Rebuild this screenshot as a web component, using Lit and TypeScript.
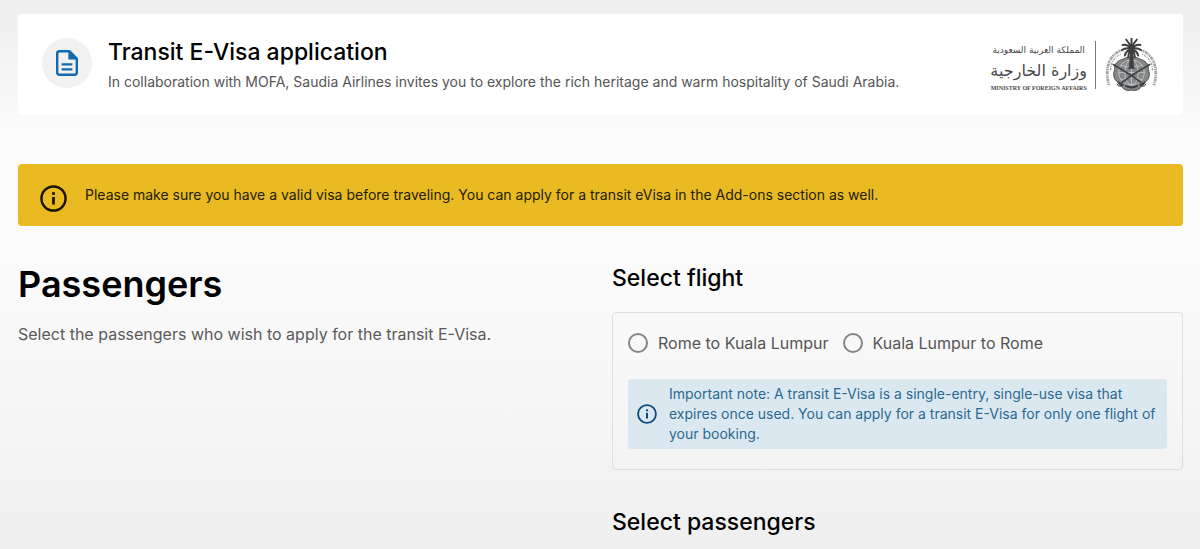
import { LitElement, html, css, svg } from "lit";
import { customElement, state } from "lit/decorators.js";

const infoIcon = svg`
  <circle cx="12" cy="12" r="10.7" fill="none" stroke="currentColor" stroke-width="2.2"></circle>
  <rect x="10.8" y="6.4" width="2.4" height="2.4" fill="currentColor"></rect>
  <rect x="10.8" y="10.6" width="2.4" height="6.8" fill="currentColor"></rect>`;

@customElement("mofa-logo")
class MofaLogo extends LitElement {
  static styles = css`
    :host {
      display: flex;
      align-items: center;
      gap: 8px;
      color: #48494b;
    }
    .words {
      display: flex;
      flex-direction: column;
      align-items: center;
      padding-top: 5px;
      white-space: nowrap;
    }
    .kingdom {
      font: 9px/16px "DejaVu Sans", sans-serif;
    }
    .ministry {
      font: 16px/26px "DejaVu Sans", sans-serif;
    }
    .english {
      font: bold 6px/8px "Liberation Serif", serif;
    }
    .rule {
      width: 1px;
      height: 48px;
      background: #77787a;
    }
    svg {
      width: 55px;
      height: 55px;
      display: block;
    }
  `;
  render() {
    return html`
      <div class="words">
        <span class="kingdom" lang="ar" dir="rtl">المملكة العربية السعودية</span>
        <span class="ministry" lang="ar" dir="rtl">وزارة الخارجية</span>
        <span class="english">MINISTRY OF FOREIGN AFFAIRS</span>
      </div>
      <span class="rule"></span>
      <svg viewBox="370 36 164 166" aria-hidden="true" fill="none" stroke="#4b4c4e">
        <g stroke="#a2a3a5" stroke-width="8">
          <path stroke-dasharray="5 2 9 2 3 2" d="M418 78C385 92 370 130 384 181"></path>
          <path stroke-dasharray="5 2 9 2 3 2" d="M486 78C519 92 534 130 520 181"></path>
        </g>
        <g stroke="#a2a3a5" stroke-width="4">
          <path stroke-dasharray="3 3 7 3" d="M420 88C397 99 388 118 389 138"></path>
          <path stroke-dasharray="3 3 7 3" d="M484 88C507 99 516 118 515 138"></path>
        </g>
        <path fill="#858789" stroke="#4b4c4e" stroke-width="3" d="M427 103C438 94 466 94 477 103C492 105 507 119 502 134C511 149 504 170 487 175C478 199 462 199 452 196C442 199 426 199 417 175C400 170 393 149 402 134C397 119 412 105 427 103Z"></path>
        <g stroke="#d6d7d8" stroke-width="2">
          <ellipse cx="452" cy="143" rx="39" ry="38"></ellipse>
          <ellipse cx="452" cy="143" rx="20" ry="38"></ellipse>
          <path d="M413 143H491M419 121Q452 133 485 121M419 165Q452 154 485 165M452 105V181"></path>
        </g>
        <g stroke="#414244" stroke-linecap="round">
          <path stroke-width="5" d="M397 119C422 133 449 148 487 178M507 119C482 133 455 148 417 178"></path>
          <path stroke-width="6" d="M478 180Q486 184 491 173M426 180Q418 184 413 173"></path>
          <path stroke-width="3" d="M480 184Q493 188 495 178M424 184Q411 188 409 178"></path>
          <path stroke-width="7" d="M436 184Q452 192 468 184"></path>
        </g>
        <path fill="#3e3f41" stroke="none" d="M447 74H457L459 126L464 132H440L445 126Z"></path>
        <g stroke="#3e3f41" stroke-width="6" stroke-linecap="round" stroke-linejoin="round">
          <path d="M452 72V41M452 72Q446 54 436 44M452 72Q458 54 468 44M452 72Q440 57 425 60M452 72Q464 57 479 60M452 72Q436 66 422 76M452 72Q468 66 482 76M452 72Q436 75 432 92M452 72Q468 75 472 92M452 72Q443 80 442 97M452 72Q461 80 462 97"></path>
        </g>
      </svg>
    `;
  }
}

@customElement("app-root")
class AppRoot extends LitElement {
  @state() private flight = "";

  static styles = css`
    :host {
      display: block;
      font-family: Inter, "Open Sans", sans-serif;
      color: #000;
    }
    * {
      box-sizing: border-box;
    }
    h1,
    h2,
    p,
    fieldset {
      margin: 0;
      padding: 0;
      border: 0;
    }
    .page {
      min-height: 100vh;
      padding: 14px 17px 14px 18px;
      background: linear-gradient(#eeeeee 0, #fbfbfb 24%, #fbfbfb 46%, #f6f6f6 74%, #efefef 100%);
    }
    .hero {
      display: flex;
      align-items: center;
      gap: 16px;
      padding: 19px 24px;
      min-height: 101px;
      background: #fff;
      border-radius: 4px;
    }
    .badge {
      display: flex;
      align-items: center;
      justify-content: center;
      flex: none;
      width: 50px;
      height: 50px;
      margin-bottom: 4px;
      border-radius: 50%;
      background: #f1f1f1;
    }
    .badge svg {
      width: 22px;
      height: 26px;
    }
    .intro {
      flex: 1;
      min-width: 0;
      padding-top: 2px;
    }
    .title {
      font-size: 23px;
      line-height: 32px;
      font-weight: 500;
    }
    .lead {
      font-size: 14px;
      line-height: 28px;
      color: #555;
    }
    .alert {
      display: flex;
      align-items: center;
      gap: 18px;
      margin-top: 49px;
      padding: 14px 22px;
      min-height: 62px;
      border-radius: 4px;
      background: #e9ba22;
      font-size: 14px;
      line-height: 20px;
      color: #241c04;
    }
    .alert svg {
      flex: none;
      align-self: flex-end;
      width: 27px;
      height: 27px;
      color: #1a1400;
    }
    .columns {
      display: grid;
      grid-template-columns: 1fr 1fr;
      gap: 23px;
      margin-top: 34px;
    }
    .heading {
      font-size: 36px;
      line-height: 48px;
      font-weight: 600;
    }
    .hint {
      margin-top: 14px;
      font-size: 16px;
      line-height: 24px;
      color: #5a5a5a;
    }
    .title.flight {
      margin-top: 2px;
    }
    .panel {
      margin-top: 18px;
      padding: 14px 15px 20px;
      border: 1px solid #dfdfdf;
      border-radius: 4px;
    }
    .options {
      display: flex;
      flex-wrap: wrap;
      gap: 14px;
      padding: 4px 0;
    }
    .option {
      display: flex;
      align-items: center;
      gap: 10px;
      font-size: 16px;
      line-height: 24px;
      color: #555;
    }
    .option input {
      appearance: none;
      width: 20px;
      height: 20px;
      margin: 0;
      border: 2px solid #858585;
      border-radius: 50%;
    }
    .option input:checked {
      background: radial-gradient(#0f68a8 45%, transparent 50%);
    }
    .note {
      display: flex;
      align-items: center;
      gap: 12px;
      margin-top: 20px;
      padding: 5px 9px;
      border-radius: 3px;
      background: #dce8f0;
      color: #2a6a92;
      font-size: 14px;
      line-height: 20px;
    }
    .note svg {
      flex: none;
      width: 20px;
      height: 20px;
      color: #0d4b7d;
    }
    .title.people {
      margin-top: 36px;
    }
  `;

  private option(value: string, label: string) {
    return html`<label class="option">
      <input
        type="radio"
        name="flight"
        .checked=${this.flight === value}
        @change=${() => (this.flight = value)}
      />${label}
    </label>`;
  }

  render() {
    return html`
      <main class="page">
        <header class="hero">
          <span class="badge">
            <svg viewBox="0 0 22 26" aria-hidden="true">
              <path fill="none" stroke="#1269ad" stroke-width="2.4" stroke-linejoin="round" d="M3.6 1.2H13.4L20.8 8.6V22.6Q20.8 24.8 18.6 24.8H3.4Q1.2 24.8 1.2 22.6V3.4Q1.2 1.2 3.6 1.2Z"></path>
              <path fill="#1269ad" d="M12.4 1V9.4H21Z"></path>
              <path stroke="#1269ad" stroke-width="2.2" d="M5.6 14.4H16.4M5.6 19.4H16.4"></path>
            </svg>
          </span>
          <div class="intro">
            <h2 class="title">Transit E-Visa application</h2>
            <p class="lead">In collaboration with MOFA, Saudia Airlines invites you to explore the rich heritage and warm hospitality of Saudi Arabia.</p>
          </div>
          <mofa-logo></mofa-logo>
        </header>

        <div class="alert" role="status">
          <svg viewBox="0 0 24 24" aria-hidden="true">${infoIcon}</svg>
          <p>Please make sure you have a valid visa before traveling. You can apply for a transit eVisa in the Add-ons section as well.</p>
        </div>

        <div class="columns">
          <section>
            <h1 class="heading">Passengers</h1>
            <p class="hint">Select the passengers who wish to apply for the transit E-Visa.</p>
          </section>
          <section>
            <h2 class="title flight">Select flight</h2>
            <div class="panel">
              <fieldset class="options" aria-label="Select flight">
                ${this.option("outbound", "Rome to Kuala Lumpur")}
                ${this.option("return", "Kuala Lumpur to Rome")}
              </fieldset>
              <div class="note">
                <svg viewBox="0 0 24 24" aria-hidden="true">${infoIcon}</svg>
                <p>Important note: A transit E-Visa is a single-entry, single-use visa that expires once used. You can apply for a transit E-Visa for only one flight of your booking.</p>
              </div>
            </div>
            <h2 class="title people">Select passengers</h2>
          </section>
        </div>
      </main>
    `;
  }
}
